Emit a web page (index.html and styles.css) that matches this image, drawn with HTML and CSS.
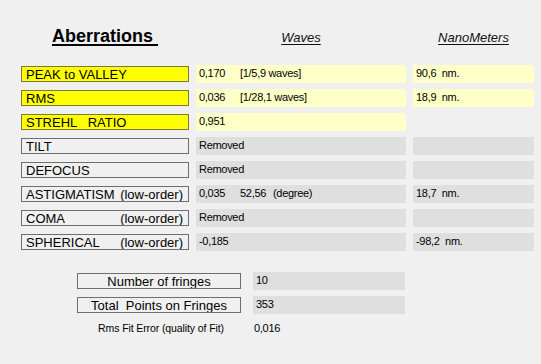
FILE: index.html
```html
<!DOCTYPE html>
<html>
<head>
<meta charset="utf-8">
<link rel="stylesheet" href="styles.css">
</head>
<body>
<div class="panel">
  <div class="head">
    <div class="title">Aberrations&nbsp;</div>
    <div class="colhead">Waves</div>
    <div class="colhead">NanoMeters</div>
  </div>

  <div class="rows">
    <div class="label yellow">PEAK to VALLEY</div>
    <div class="field light"><span class="v1">0,170</span><span>[1/5,9 waves]</span></div>
    <div class="field light">90,6  nm.</div>

    <div class="label yellow">RMS</div>
    <div class="field light"><span class="v1">0,036</span><span>[1/28,1 waves]</span></div>
    <div class="field light">18,9  nm.</div>

    <div class="label yellow">STREHL   RATIO</div>
    <div class="field light">0,951</div>
    <div></div>

    <div class="label">TILT</div>
    <div class="field gray">Removed</div>
    <div class="field gray"></div>

    <div class="label">DEFOCUS</div>
    <div class="field gray">Removed</div>
    <div class="field gray"></div>

    <div class="label split"><span>ASTIGMATISM</span><span>(low-order)</span></div>
    <div class="field gray"><span class="v1">0,035</span><span class="v2">52,56</span><span>(degree)</span></div>
    <div class="field gray">18,7  nm.</div>

    <div class="label split"><span>COMA</span><span>(low-order)</span></div>
    <div class="field gray">Removed</div>
    <div class="field gray"></div>

    <div class="label split"><span>SPHERICAL</span><span>(low-order)</span></div>
    <div class="field gray">-0,185</div>
    <div class="field gray">-98,2  nm.</div>
  </div>

  <div class="stats">
    <div class="label center">Number of fringes</div>
    <div class="field gray">10</div>

    <div class="label center">Total  Points on Fringes</div>
    <div class="field gray">353</div>

    <div class="note">Rms Fit Error (quality of Fit)</div>
    <div class="plain">0,016</div>
  </div>
</div>
</body>
</html>
```

FILE: styles.css
```css
html, body {
  margin: 0;
  padding: 0;
  background: #f0f0f0;
}

body {
  width: 541px;
  height: 364px;
  overflow: hidden;
  font-family: "Liberation Sans", Arial, sans-serif;
  color: #000;
}

.panel {
  padding: 26px 0 0 21px;
}

.head {
  display: grid;
  grid-template-columns: 168px 210px 121px;
  column-gap: 7px;
  align-items: baseline;
  height: 20px;
}

.title {
  font-size: 18px;
  font-weight: bold;
  line-height: 20px;
  text-align: center;
  text-decoration: underline;
  text-decoration-thickness: 2px;
  text-underline-offset: 2px;
  white-space: pre;
}

.colhead {
  font-size: 13px;
  font-style: italic;
  text-align: center;
  text-decoration: underline;
  text-underline-offset: 2px;
  color: #111;
}

.rows {
  margin-top: 19px;
  display: grid;
  grid-template-columns: 168px 210px 121px;
  grid-auto-rows: 18px;
  column-gap: 7px;
  row-gap: 6px;
}

.label {
  box-sizing: border-box;
  height: 16px;
  margin-top: 1px;
  border: 1px solid #6e6e6e;
  padding: 0 4px;
  font-size: 13px;
  line-height: 15px;
  white-space: pre;
  overflow: hidden;
}

.yellow {
  background: #ffff00;
  border-color: #7a7a40;
}

.split {
  display: flex;
  justify-content: space-between;
  padding-right: 5px;
}

.center {
  text-align: center;
}

.field {
  box-sizing: border-box;
  height: 18px;
  padding: 0 3px;
  font-size: 11px;
  line-height: 16px;
  letter-spacing: -0.3px;
  white-space: pre;
  display: flex;
}

.light {
  background: #ffffc8;
}

.gray {
  background: #dfdfdf;
}

.v1 {
  width: 41px;
}

.v2 {
  width: 33px;
}

.stats {
  margin: 21px 0 0 56px;
  display: grid;
  grid-template-columns: 164px 152px;
  grid-auto-rows: 18px;
  column-gap: 12px;
  row-gap: 6px;
}

.note {
  font-size: 10.5px;
  line-height: 16px;
  text-align: center;
  padding-left: 4px;
  letter-spacing: -0.1px;
}

.plain {
  font-size: 11px;
  line-height: 16px;
  padding-left: 1px;
  letter-spacing: -0.3px;
}
```
